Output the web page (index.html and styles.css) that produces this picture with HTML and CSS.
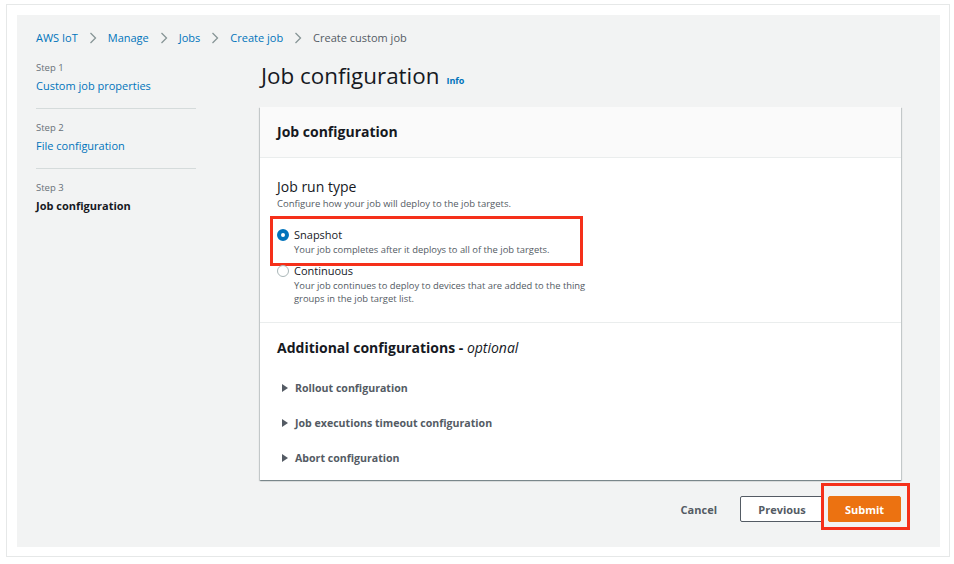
FILE: index.html
```html
<!DOCTYPE html>
<html lang="en">
<head>
<meta charset="utf-8">
<title>Create custom job</title>
<link rel="stylesheet" href="styles.css">
</head>
<body>
<div class="frame">
  <div class="panel">
    <nav class="breadcrumb">
      <a class="crumb">AWS IoT</a>
      <svg class="chev" width="8" height="12" viewBox="0 0 8 12"><polyline points="1.5,1 6.5,6 1.5,11" fill="none" stroke="#879596" stroke-width="1.3"/></svg>
      <a class="crumb">Manage</a>
      <svg class="chev" width="8" height="12" viewBox="0 0 8 12"><polyline points="1.5,1 6.5,6 1.5,11" fill="none" stroke="#879596" stroke-width="1.3"/></svg>
      <a class="crumb">Jobs</a>
      <svg class="chev" width="8" height="12" viewBox="0 0 8 12"><polyline points="1.5,1 6.5,6 1.5,11" fill="none" stroke="#879596" stroke-width="1.3"/></svg>
      <a class="crumb">Create job</a>
      <svg class="chev" width="8" height="12" viewBox="0 0 8 12"><polyline points="1.5,1 6.5,6 1.5,11" fill="none" stroke="#879596" stroke-width="1.3"/></svg>
      <span class="crumb current">Create custom job</span>
    </nav>

    <div class="layout">
      <ul class="steps">
        <li class="step">
          <div class="step-num">Step 1</div>
          <a class="step-link">Custom job properties</a>
        </li>
        <li class="step">
          <div class="step-num">Step 2</div>
          <a class="step-link">File configuration</a>
        </li>
        <li class="step">
          <div class="step-num">Step 3</div>
          <span class="step-link active">Job configuration</span>
        </li>
      </ul>

      <main class="main">
        <h1 class="title">Job configuration <a class="info">Info</a></h1>

        <section class="card">
          <header class="card-head">Job configuration</header>
          <div class="card-section">
            <h2 class="field-label">Job run type</h2>
            <p class="field-desc">Configure how your job will deploy to the job targets.</p>
            <div class="options">
              <div class="option annotated">
                <span class="radio checked"></span>
                <div class="option-text">
                  <div class="option-title">Snapshot</div>
                  <div class="option-desc">Your job completes after it deploys to all of the job targets.</div>
                </div>
              </div>
              <div class="option">
                <span class="radio"></span>
                <div class="option-text">
                  <div class="option-title">Continuous</div>
                  <div class="option-desc">Your job continues to deploy to devices that are added to the thing<br>groups in the job target list.</div>
                </div>
              </div>
            </div>
          </div>
          <div class="card-section second">
            <h2 class="section-title">Additional configurations - <em>optional</em></h2>
            <div class="expander"><span class="caret"></span>Rollout configuration</div>
            <div class="expander"><span class="caret"></span>Job executions timeout configuration</div>
            <div class="expander"><span class="caret"></span>Abort configuration</div>
          </div>
        </section>

        <div class="actions">
          <button class="btn link">Cancel</button>
          <button class="btn normal">Previous</button>
          <span class="submit-wrap"><button class="btn primary">Submit</button></span>
        </div>
      </main>
    </div>
  </div>
</div>
</body>
</html>
```

FILE: styles.css
```css
* { box-sizing: border-box; }
html, body { margin: 0; padding: 0; background: #fff; }
body {
  font-family: "Open Sans", "Noto Sans", sans-serif;
  color: #16191f;
  width: 954px;
  height: 564px;
  overflow: hidden;
}
a { text-decoration: none; }

.frame {
  margin: 4px 4px 0 6px;
  border: 1px solid #e6e8e8;
  padding: 10px 9px 9px 10px;
  height: 553px;
}
.panel {
  background: #f2f3f3;
  height: 532px;
  padding: 15px 38px 0 19px;
}

.breadcrumb {
  display: flex;
  align-items: center;
  height: 16px;
  font-size: 11px;
  line-height: 16px;
}
.crumb { color: #0073bb; }
.crumb.current { color: #545b64; }
.chev { margin: 0 11px 0 11px; }

.layout {
  display: grid;
  grid-template-columns: 160px 1fr;
  column-gap: 64px;
  margin-top: 15px;
}

.steps { list-style: none; margin: 0; padding: 0; }
.step {
  padding: 12px 0 14px;
  border-bottom: 1px solid #d5dbdb;
}
.step:first-child { padding-top: 0; }
.step:last-child { border-bottom: none; }
.step-num {
  font-size: 9.5px;
  line-height: 14px;
  color: #687078;
  margin-bottom: 3px;
}
.step-link {
  display: block;
  font-size: 11px;
  line-height: 16px;
  color: #0073bb;
}
.step-link.active { color: #16191f; font-weight: 700; }

.main { min-width: 0; }
.title {
  margin: 0 0 16px 1px;
  height: 30px;
  font-size: 22.4px;
  line-height: 30px;
  font-weight: 400;
  color: #16191f;
  display: flex;
  align-items: baseline;
}
.info {
  font-size: 9px;
  line-height: 1;
  font-weight: 700;
  color: #0073bb;
  margin-left: 7px;
}

.card {
  width: 641px;
  background: #fff;
  box-shadow: 0 1px 1px 0 rgba(0,28,36,.3), 1px 1px 1px 0 rgba(0,28,36,.15), -1px 1px 1px 0 rgba(0,28,36,.15);
}
.card-head {
  height: 51px;
  line-height: 50px;
  padding-left: 17px;
  font-size: 14px;
  font-weight: 700;
  background: #fafafa;
  border-bottom: 1px solid #eaeded;
}
.card-section {
  padding: 19px 17px 17px;
  border-bottom: 1px solid #eaeded;
}
.card-section.second {
  padding: 15px 17px 5px;
  border-bottom: none;
}
.field-label {
  margin: 0;
  font-size: 14px;
  line-height: 20px;
  font-weight: 400;
}
.field-desc {
  margin: 0;
  font-size: 9.5px;
  line-height: 14px;
  color: #545b64;
}

.options {
  margin-top: 16px;
  display: flex;
  flex-direction: column;
  gap: 7px;
}
.option {
  position: relative;
  display: flex;
  align-items: flex-start;
  gap: 5px;
}
.option.annotated::after {
  content: "";
  position: absolute;
  left: -7px;
  top: -11px;
  width: 307px;
  height: 44px;
  border: 3px solid #f5301a;
}
.radio {
  flex: none;
  width: 12px;
  height: 12px;
  margin-top: 2px;
  border-radius: 50%;
  border: 1px solid #aab7b8;
  background: #fff;
}
.radio.checked {
  border: 4px solid #0073bb;
}
.option-title {
  font-size: 11px;
  line-height: 16px;
}
.option-desc {
  font-size: 9.4px;
  line-height: 13px;
  color: #545b64;
}

.section-title {
  margin: 0 0 12px;
  font-size: 14px;
  line-height: 20px;
  font-weight: 700;
}
.section-title em { font-weight: 400; }
.expander {
  display: flex;
  align-items: center;
  height: 35px;
  font-size: 10.6px;
  font-weight: 700;
  color: #545b64;
}
.caret {
  width: 0;
  height: 0;
  border-top: 4px solid transparent;
  border-bottom: 4px solid transparent;
  border-left: 6px solid #545b64;
  margin: 0 7px 0 5px;
}

.actions {
  width: 641px;
  margin-top: 16px;
  display: flex;
  justify-content: flex-end;
  align-items: center;
}
.btn {
  font-family: inherit;
  font-size: 11px;
  font-weight: 700;
  height: 26px;
  border-radius: 2px;
  cursor: pointer;
}
.btn.link {
  background: none;
  border: none;
  color: #545b64;
  padding: 0 15px;
  margin-right: 8px;
}
.btn.normal {
  background: #fff;
  border: 1px solid #545b64;
  color: #545b64;
  width: 84px;
  padding: 0;
}
.submit-wrap {
  position: relative;
  margin-left: 4px;
  display: flex;
}
.submit-wrap::after {
  content: "";
  position: absolute;
  left: -7px;
  top: -13px;
  right: -9px;
  bottom: -8px;
  border: 3px solid #f5301a;
}
.btn.primary {
  background: #ec7211;
  border: 1px solid #ec7211;
  color: #fff;
  width: 73px;
  padding: 0;
}
```
